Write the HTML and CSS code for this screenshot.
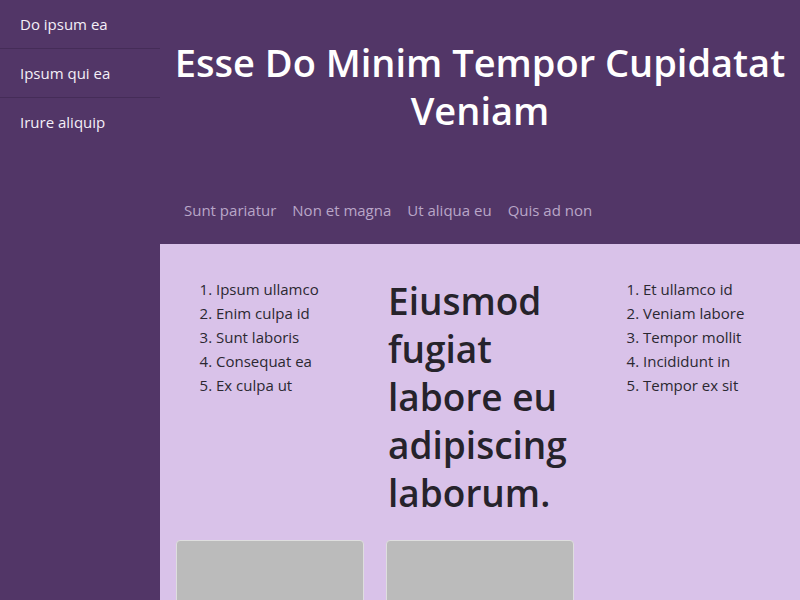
FILE: index.html
```html
<!DOCTYPE html>
<html>
<head>
<meta charset="utf-8">
<link rel="stylesheet" href="styles.css">
</head>
<body>
<div class="app">
  <aside class="sidebar">
    <a class="side-item" href="#">Do ipsum ea</a>
    <a class="side-item" href="#">Ipsum qui ea</a>
    <a class="side-item" href="#">Irure aliquip</a>
  </aside>
  <div class="page">
    <header class="header">
      <h1 class="title">Esse Do Minim Tempor Cupidatat Veniam</h1>
      <nav class="nav">
        <a href="#">Sunt pariatur</a>
        <a href="#">Non et magna</a>
        <a href="#">Ut aliqua eu</a>
        <a href="#">Quis ad non</a>
      </nav>
    </header>
    <main class="main">
      <div class="row">
        <ol class="list">
          <li>Ipsum ullamco</li>
          <li>Enim culpa id</li>
          <li>Sunt laboris</li>
          <li>Consequat ea</li>
          <li>Ex culpa ut</li>
        </ol>
        <h2 class="lead">Eiusmod fugiat labore eu adipiscing laborum.</h2>
        <ol class="list list-right">
          <li>Et ullamco id</li>
          <li>Veniam labore</li>
          <li>Tempor mollit</li>
          <li>Incididunt in</li>
          <li>Tempor ex sit</li>
        </ol>
      </div>
      <div class="cards">
        <div class="card"></div>
        <div class="card"></div>
      </div>
    </main>
  </div>
</div>
</body>
</html>
```
FILE: styles.css
```css
* { box-sizing: border-box; }
html, body { margin: 0; padding: 0; }
body {
  font-family: "Open Sans", "Noto Sans", sans-serif;
  background: #d9c2e9;
  width: 800px;
  height: 600px;
  overflow: hidden;
}
.app {
  display: flex;
  height: 600px;
}
.sidebar {
  width: 160px;
  flex: none;
  background: #523667;
  display: flex;
  flex-direction: column;
}
.side-item {
  display: block;
  height: 49px;
  padding: 0 20px;
  line-height: 48px;
  font-size: 15px;
  color: #f4eff7;
  text-decoration: none;
  border-bottom: 1px solid #452c58;
}
.side-item:last-child { border-bottom-color: transparent; }
.page {
  flex: 1;
  display: flex;
  flex-direction: column;
  min-height: 0;
}
.header {
  flex: none;
  background: #523667;
  height: 244px;
  padding-top: 38px;
}
.title {
  margin: 0;
  text-align: center;
  color: #ffffff;
  font-size: 38px;
  font-weight: 600;
  line-height: 48px;
}
.nav {
  display: flex;
  gap: 16px;
  padding: 0 24px;
  margin-top: 64px;
}
.nav a {
  color: #b9a6c8;
  text-decoration: none;
  font-size: 15px;
  line-height: 24px;
}
.main {
  flex: 1;
  min-height: 0;
  background: #d9c2e9;
  padding: 33px 16px 0;
}
.row {
  display: grid;
  grid-template-columns: 188px 188px 188px;
  column-gap: 22px;
}
.list {
  margin: 0;
  padding-left: 40px;
  font-size: 15px;
  line-height: 24px;
  color: #2b2831;
}
.list-right { padding-left: 47px; }
.lead {
  margin: 0;
  padding-left: 2px;
  font-size: 37px;
  line-height: 48px;
  font-weight: 600;
  color: #26232b;
}
.cards {
  display: grid;
  grid-template-columns: 188px 188px 188px;
  column-gap: 22px;
  margin-top: 23px;
}
.card {
  height: 80px;
  background: #bbbbbb;
  border: 1px solid #dedede;
  border-radius: 4px;
}
```
